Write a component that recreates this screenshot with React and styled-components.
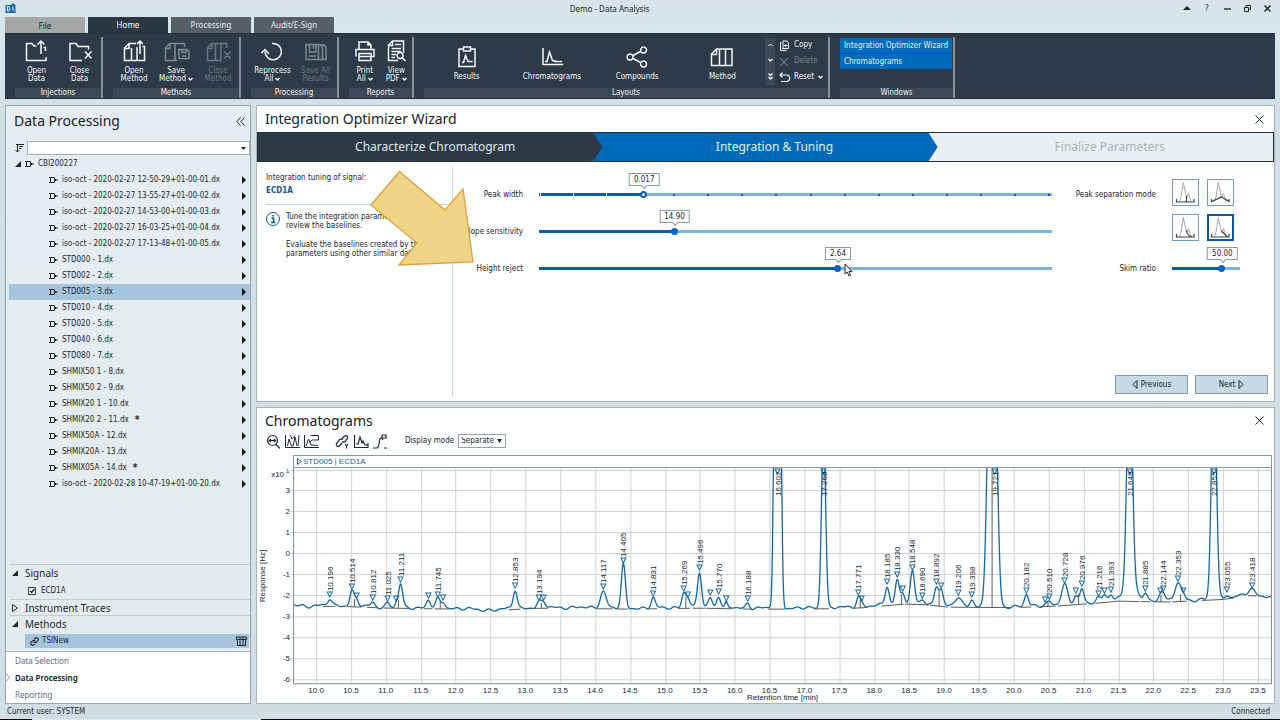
import React, { useState } from 'react';
import styled, { createGlobalStyle, css } from 'styled-components';
import { Link } from 'lucide-react';

const GlobalStyle = createGlobalStyle`
  * {
    box-sizing: border-box;
  }
  body {
    margin: 0;
    background: #d3dfe6;
  }
  body, button, input, select {
    font-family: "DejaVu Sans Condensed", "DejaVu Sans", sans-serif;
    font-size: 8px;
    line-height: 8px;
    color: #20282e;
  }
  button {
    padding: 0;
    border: 0;
    background: none;
  }
`;

const headingFont = '"Noto Sans", "Open Sans", sans-serif';

/* ---------- data ---------- */

const samples = [
  'iso-oct - 2020-02-27 12-50-29+01-00-01.dx',
  'iso-oct - 2020-02-27 13-55-27+01-00-02.dx',
  'iso-oct - 2020-02-27 14-53-00+01-00-03.dx',
  'iso-oct - 2020-02-27 16-03-25+01-00-04.dx',
  'iso-oct - 2020-02-27 17-13-48+01-00-05.dx',
  'STD000 - 1.dx',
  'STD002 - 2.dx',
  'STD005 - 3.dx',
  'STD010 - 4.dx',
  'STD020 - 5.dx',
  'STD040 - 6.dx',
  'STD080 - 7.dx',
  'SHMIX50 1 - 8.dx',
  'SHMIX50 2 - 9.dx',
  'SHMIX20 1 - 10.dx',
  'SHMIX20 2 - 11.dx',
  'SHMIX50A - 12.dx',
  'SHMIX20A - 13.dx',
  'SHMIX05A - 14.dx',
  'iso-oct - 2020-02-28 10-47-19+01-00-20.dx',
];

const changed = ['SHMIX20 2 - 11.dx', 'SHMIX05A - 14.dx'];

// retention time, apex height in px, half width in px, hide the label
const peaks = [
  [10.196, 599, 2], [10.514, 591, 2], [10.58, 600, 2, true], [10.812, 602, 2],
  [11.025, 603, 2], [11.15, 603, 1, true], [11.211, 584, 2], [11.61, 600, 2, true],
  [11.745, 599, 2], [11.82, 602, 2, true], [12.853, 590, 2], [13.194, 602, 2],
  [13.26, 602, 2, true], [14.117, 591, 3], [14.405, 565, 2], [14.831, 598, 2],
  [15.269, 593, 2], [15.33, 599, 2, true], [15.496, 572, 2], [15.65, 597, 2, true],
  [15.77, 596, 2], [15.88, 603, 1, true], [16.188, 603, 2], [17.771, 597, 2],
  [17.82, 603, 2, true], [18.185, 586, 2], [18.33, 579, 2], [18.41, 593, 2, true],
  [18.548, 572, 2], [18.69, 600, 2], [18.892, 586, 2], [18.96, 590, 2, true],
  [19.206, 597, 3], [19.398, 599, 2], [20.182, 595, 2], [20.45, 604, 2, true],
  [20.51, 601, 2], [20.728, 585, 3], [20.89, 595, 2, true], [20.976, 588, 2],
  [21.216, 598, 2], [21.3, 595, 2, true], [21.393, 594, 2], [21.885, 593, 2],
  [22.1, 595, 2, true], [22.144, 593, 2], [22.353, 583, 3], [22.43, 595, 2, true],
  [23.055, 594, 2], [23.418, 590, 3],
];

// peaks that run out of the plot: center px, amplitude, sigma
const tallPeaks = [
  [777, 1100, 2.1], [823, 183, 2], [988.5, 204, 2.6], [994.5, 204, 2.6],
  [1128.8, 237, 2.6], [1129, 16, 6], [1213, 237, 2.4],
];
const tallLabels = [[777, '16.602'], [823, '17.268'], [994, '19.721'], [1129, '21.648'], [1213, '22.855']];

const baseline = [
  [9.6, 604], [9.9, 606], [10.3, 605], [11, 607], [12, 608], [12.4, 610], [13.2, 607], [14.5, 608],
  [15.5, 607], [16.2, 608], [17, 608], [17.8, 607], [18.1, 605], [18.6, 602], [19, 606],
  [20, 606.5], [20.6, 605], [21.2, 602], [21.5, 600], [22.2, 601], [22.8, 599], [23.1, 598],
  [23.3, 594], [23.5, 595], [23.8, 598],
];

const drops = [
  [10.55, 599], [11.18, 600], [11.78, 601], [13.23, 603], [15.3, 597], [17.8, 599], [18.39, 594],
  [18.93, 590], [19.69, 468], [20.49, 601], [20.93, 594], [22.11, 595], [22.39, 594],
];
const cuts = [
  [10.1, 10.28], [10.45, 10.65], [10.73, 10.88], [10.97, 11.34], [11.55, 11.67], [11.7, 11.9],
  [12.76, 12.93], [13.13, 13.32], [14.02, 14.25], [14.32, 14.47], [14.76, 14.89], [15.19, 15.36],
  [15.4, 15.58], [15.59, 15.95], [16.12, 16.25], [16.48, 16.72], [17.15, 17.35], [17.7, 17.9],
  [18.1, 18.42], [18.44, 18.78], [18.8, 19.05], [19.1, 19.95], [20.1, 20.25], [20.38, 20.6],
  [20.63, 21.05], [21.17, 21.5], [21.5, 21.8], [21.82, 21.96], [22.03, 22.25], [22.27, 22.48],
  [22.7, 23], [22.98, 23.15], [23.36, 23.48],
];

const toX = (min) => 316 + (min - 10) * 69.7;
const toMin = (x) => 10 + (x - 316) / 69.7;

const baseAt = (min) => {
  const i = Math.max(1, baseline.findIndex(([m]) => m >= min));
  const [m0, y0] = baseline[i - 1];
  const [m1, y1] = baseline[i];
  return y0 + ((y1 - y0) * (min - m0)) / (m1 - m0);
};

const signal = () => {
  const points = [];
  for (let x = 294; x <= 1270; x += 0.5) {
    const min = toMin(x);
    const base = baseAt(min);
    let y = base + Math.sin(x * 0.37) * 0.8 + Math.sin(x * 0.61 + 2) * 0.7 + Math.sin(x * 0.17) * 0.6;
    peaks.forEach(([m, apex, w]) => {
      y -= (baseAt(m) - apex) * Math.exp(-((x - toX(m)) ** 2) / (2 * w * w));
    });
    tallPeaks.forEach(([c, a, s]) => {
      y -= a * Math.exp(-((x - c) ** 2) / (2 * s * s));
    });
    points.push(`${x},${Math.max(y, 460).toFixed(1)}`);
  }
  return points.join(' ');
};

/* ---------- icons ---------- */

const Svg = styled.svg`
  display: block;
  flex: none;
  fill: none;
  stroke: currentColor;
  stroke-width: ${(p) => p.$w || 1.4};
  overflow: visible;
`;

const Icon = ({ size = 24, height, box, w, children }) => (
  <Svg width={size} height={height || size} viewBox={box || `0 0 ${size} ${height || size}`} $w={w} aria-hidden="true">
    {children}
  </Svg>
);

const ribbonIcons = {
  openData: <path d="M11.500 7H9L7 4.500H1.500V21.500H21V18M20.500 12V8.500H18.500M16 15V2M12.500 5.500L16 2 19.500 5.500" />,
  closeData: <path d="M14 21.500H2V4.500H8L10 7.500H20.500V10.500M17 12.500L23.500 19.500M23.500 12.500L17 19.500" />,
  openMethod: <path d="M14 4.500H7L2.500 9V21.500H22.500V7.500H20.500M2.500 9.500H7V4.500M9.500 21.500V9M15 21.500V8M18 15V2M15 5L18 2 21 5" />,
  saveMethod: <path d="M13 21.500H1.500V9L6 4.500H20.500V8M1.500 9.500H6V4.500M11 4.500V21.500M15 10.500H23L25 12.500V19.500H15ZM18 10.500V13.500H22V10.500M18 17H22" />,
  closeMethod: <path d="M15 21.500H1.500V9L6 4.500H20.500V9M1.500 9.500H6V4.500M9.500 4.500V21.500M15 4.500V21.500M18 12.500L24.500 19.500M24.500 12.500L18 19.500" />,
  reprocess: <path d="M11 4.500A8.200 8.200 0 1 1 4 12.500M.5 14L4 10.500 8 15" />,
  saveAll: <path d="M2 5.500H14.500V20.500H2ZM5.500 5.500V13H12V5.500M9.500 5.500V10M15 5.500Q18.500 6 18.500 10V20.500M18 5.500Q22 6 22 10V20.500H2M5 17H12" />,
  print: <path d="M6 10.500V3H15L18 6V10.500M3 17.500V10.500H21V17.500H18M6 14.500H18V21.500H6ZM15 3V6H18M6 17.500H18" />,
  pdf: <path d="M14 21.500H4.500V6L8.500 2H19.500V14M4.500 6.500H8.500V2M11 5.500H17M7.500 9.500H17M7.500 12.500H17M7.500 15.500H12M7.500 18.500H11M16 13.500a3 3 0 1 0 .1 0M18 18.500L21.500 22" />,
  results: <path d="M8 4H4V21.500H20V4H16M8.500 2H15.500V6H8.500ZM7 17.500H8.500L10.500 10.500 13 16.500H17.500" />,
  chrom: <path d="M3 3V19.500H23M5 16.500H7L9.500 7 12.500 15.500Q16 17 22 16.500" />,
  compounds: <path d="M8 10.500L15.500 6.500M8 13.500L15.500 17.500M5 9a3 3 0 1 0 .1 0M18.500 2a3 3 0 1 0 .1 0M18.500 16a3 3 0 1 0 .1 0" />,
  method: <path d="M6.500 4H22V20.500H1.500V9ZM1.500 9.500H6.500V4M9.500 4V20.500M15.500 4V20.500" />,
};

const Chevron = () => (
  <Icon size={5} height={4} w={1.4}><path d="M0.500 1L2.500 3 4.500 1" /></Icon>
);

const CloseIcon = () => (
  <Icon size={9} w={1}><path d="M0.500 .5L8.500 8.500M8.500 .5L.5 8.500" /></Icon>
);

const SampleIcon = () => (
  <Icon size={9} height={8} w={1}>
    <path d="M0 1.500H5.500V6.500H0M1.500 1.500V6.500M5.500 2.500L7 4 5.500 5.500M7 4H9" />
  </Icon>
);

const TriOpen = () => (
  <Icon size={6} w={1}><path d="M6 0V6H0Z" fill="currentColor" stroke="none" /></Icon>
);

const TriClosed = () => (
  <Icon size={6} height={8} w={1}><path d="M.5 .5L5.500 4 .5 7.500Z" /></Icon>
);

/* ---------- window frame ---------- */

const Page = styled.div`
  display: flex;
  flex-direction: column;
  min-height: 100vh;
  background: linear-gradient(#d9e3ec, #d8e7ec 32px, #d3dfe6 104px, #d2dee5);
`;

const TitleBar = styled.header`
  display: flex;
  align-items: center;
  height: 17px;
  padding: 0 3px 0 5px;
`;

const Title = styled.h1`
  flex: 1;
  margin: 0;
  padding-left: 26px;
  text-align: center;
  font: 400 8px/12px ${headingFont};
`;

const WindowButton = styled.button`
  display: grid;
  place-items: center;
  width: 20px;
  height: 14px;
`;

const TabList = styled.nav`
  display: flex;
  align-items: flex-end;
  gap: 3px;
  height: 16px;
  padding: 0 5px;
`;

const Tab = styled.button`
  width: 80px;
  height: 16px;
  background: #545f68;
  color: #e6ebee;
  font: 400 8px/16px ${headingFont};
  ${(p) => p.$file && css`
    background: #a5a6a6;
    color: #20282e;
    line-height: 18px;
  `}
  ${(p) => p.$active && css`
    background: #2b3743;
    color: #fff;
  `}
`;

const Ribbon = styled.div`
  display: flex;
  height: 66px;
  margin: 0 5px;
  padding-top: 3px;
  background: #2d3a47;
  border-top: 1px solid #22303b;
  border-bottom: 1px solid #22303b;
  color: #eef2f4;
`;

const Group = styled.section`
  display: flex;
  flex-direction: column;
  width: ${(p) => p.$width}px;
  padding-left: 10px;
  border-right: 2px solid #84909a;
`;

const GroupBody = styled.div`
  display: flex;
  flex: 1;
`;

const GroupTitle = styled.h2`
  margin: 0;
  height: 10px;
  background: #3c4855;
  text-align: center;
  font-weight: 400;
  font-size: 8px;
  line-height: 10px;
`;

const RibbonButton = styled.button`
  display: flex;
  flex-direction: column;
  align-items: center;
  flex: 1;
  gap: 4px;
  padding-top: ${(p) => (p.$big ? 8 : 2)}px;
  color: ${(p) => (p.disabled ? '#6b7782' : '#f4f7f8')};
  & > svg {
    color: ${(p) => (p.$dim ? '#7f8a94' : 'inherit')};
  }
`;

const RibbonLabel = styled.span`
  display: flex;
  align-items: center;
  gap: 2px;
`;

const Stack = styled.span`
  display: flex;
  flex-direction: column;
  align-items: center;
`;

const Scroller = styled.div`
  display: flex;
  flex-direction: column;
  justify-content: space-around;
  align-items: center;
  width: 10px;
  margin: 1px 0 3px;
  background: #3c4855;
`;

const ActionList = styled.div`
  display: flex;
  flex-direction: column;
  width: 53px;
  padding: 0 0 3px 4px;
`;

const Action = styled.button`
  display: flex;
  align-items: center;
  flex: 1;
  gap: 4px;
  color: ${(p) => (p.disabled ? '#77838e' : '#f4f7f8')};
`;

const WindowList = styled.div`
  display: flex;
  flex-direction: column;
  flex: 1;
  gap: 1px;
  padding: 1px 1px 0 0;
`;

const WindowItem = styled.button`
  height: 15px;
  padding-left: 4px;
  background: #006bb8;
  color: #e4f1fa;
  text-align: left;
  white-space: nowrap;
`;

const Main = styled.main`
  display: grid;
  grid-template-columns: 246px minmax(0, 1fr);
  gap: 5px;
  flex: 1;
  padding: 6px 5px 0;
`;

const StatusBar = styled.footer`
  display: flex;
  justify-content: space-between;
  align-items: center;
  height: 16px;
  padding: 0 10px 0 7px;
  background: linear-gradient(90deg, #000 32px, #dfe8ec 32px, #dfe8ec 261px, #000 261px) bottom / 100% 1px no-repeat;
`;

/* ---------- left panel ---------- */

const Side = styled.aside`
  display: flex;
  flex-direction: column;
  background: linear-gradient(#e6edf2, #e4ebef);
  border: 1px solid #9aa6ae;
`;

const PanelHead = styled.div`
  display: flex;
  justify-content: space-between;
  align-items: center;
  height: ${(p) => p.$height}px;
  margin-bottom: ${(p) => p.$below || 0}px;
  padding: 0 ${(p) => p.$right}px 0 8px;
`;

const PanelTitle = styled.h2`
  margin: 0;
  font: 400 14px/20px ${headingFont};
  color: #1a2126;
`;

const FilterRow = styled.div`
  display: flex;
  align-items: center;
  gap: 3px;
  height: 14px;
  padding-left: 9px;
`;

const FilterSelect = styled.select`
  flex: 1;
  height: 14px;
  appearance: none;
  border: 1px solid #a3afb8;
  border-radius: 0;
  background: #fff;
`;

const SelectBox = styled.span`
  display: grid;
  grid-template-columns: 1fr 9px;
  align-items: center;
  flex: ${(p) => (p.$grow ? 1 : 'none')};
  & > select {
    grid-area: 1 / 1 / 2 / 3;
  }
  & > svg {
    grid-area: 1 / 2;
    pointer-events: none;
  }
`;

const Tree = styled.ul`
  flex: 1;
  margin: 0;
  padding: 1px 0 0 3px;
  list-style: none;
`;

const TreeRow = styled.li`
  display: flex;
  align-items: center;
  gap: 4px;
  height: 16px;
  padding: 0 4px 0 ${(p) => (p.$root ? 6 : 40)}px;
  background: ${(p) => (p.$selected ? '#a5c5dc' : 'transparent')};
`;

const RowName = styled.span`
  display: flex;
  align-items: center;
  gap: 6px;
  flex: 1;
  white-space: nowrap;
`;

const Star = styled.b`
  font-size: 10px;
`;

const Section = styled.section`
  margin-left: 4px;
  border-top: 1px solid #c2cbd1;
  padding-left: 2px;
`;

const SectionTitle = styled.h3`
  display: flex;
  align-items: center;
  gap: 7px;
  margin: 0;
  height: 15px;
  font: 400 10px/14px ${headingFont};
`;

const SignalRow = styled.label`
  display: flex;
  align-items: center;
  gap: 5px;
  height: 19px;
  padding: 2px 0 0 16px;
`;

const TickBox = styled.span`
  display: grid;
  place-items: center;
  width: 8px;
  height: 8px;
  & > * {
    grid-area: 1 / 1;
  }
  & > input {
    appearance: none;
    width: 8px;
    height: 8px;
    margin: 0;
    border: 1px solid #3d474e;
  }
  & > svg {
    pointer-events: none;
  }
`;

const MethodRow = styled.div`
  display: flex;
  align-items: center;
  gap: 3px;
  height: 14px;
  margin: 3px 1px 3px 13px;
  padding: 0 2px 0 5px;
  background: #a5c5dc;
  & > span {
    flex: 1;
  }
`;

const NavList = styled.nav`
  display: flex;
  flex-direction: column;
  background: #fcfdfd;
  border-top: 1px solid #a8b2b9;
`;

const NavItem = styled.a`
  position: relative;
  height: 17px;
  padding-left: 9px;
  font: ${(p) => (p.$active ? 600 : 400)} 8px/17px ${headingFont};
  color: ${(p) => (p.$active ? '#11181c' : '#65707a')};
  text-decoration: none;
  & > svg {
    position: absolute;
    left: -1px;
    top: 4px;
    color: #8d979e;
  }
`;

/* ---------- wizard ---------- */

const Content = styled.div`
  display: grid;
  grid-template-rows: 297px 1fr;
  gap: 5px;
`;

const Panel = styled.section`
  display: flex;
  flex-direction: column;
  min-width: 0;
  background: #fdfefe;
  border: 1px solid #aab5bc;
`;

const Steps = styled.ol`
  display: grid;
  grid-template-columns: 335fr 335fr 344fr;
  height: 30px;
  margin: 0;
  padding: 0;
  list-style: none;
  border: 1px solid #242e36;
  background: #e9eff3;
`;

const Step = styled.li`
  position: relative;
  z-index: ${(p) => p.$order};
  margin-right: -9px;
  padding-left: ${(p) => p.$left}px;
  background: ${(p) => p.$bg};
  color: ${(p) => p.$color};
  clip-path: polygon(0 0, calc(100% - 9px) 0, 100% 50%, calc(100% - 9px) 100%, 0 100%);
  text-align: center;
  font: 400 12px/28px ${headingFont};
  &:last-child {
    margin-right: 0;
    clip-path: none;
  }
`;

const WizardBody = styled.div`
  position: relative;
  display: grid;
  grid-template-columns: 196px minmax(0, 1fr) 200px;
  grid-template-rows: 1fr auto;
  flex: 1;
  padding: 4px 0;
`;

const Info = styled.div`
  grid-row: span 2;
  padding: 6px 4px 0 9px;
  border-right: 1px solid #d3d9dd;
  line-height: 12px;
`;

const Blue = styled.strong`
  display: block;
  margin-bottom: 6px;
  color: #12578c;
  line-height: 14px;
`;

const Note = styled.div`
  display: flex;
  gap: 6px;
  padding-top: 7px;
  border-top: 1px solid #ccd3d8;
  & p {
    margin: 0 0 10px;
    line-height: 9px;
    white-space: nowrap;
  }
`;

const SliderGrid = styled.div`
  display: grid;
  grid-template-columns: ${(p) => p.$label}px minmax(0, 1fr);
  grid-auto-rows: 37px;
  column-gap: 16px;
  align-items: center;
  align-content: start;
  padding: 10px ${(p) => p.$right}px 0 0;
`;

const FieldLabel = styled.label`
  text-align: right;
  white-space: nowrap;
`;

const SliderBox = styled.div`
  position: relative;
  display: grid;
  align-items: center;
  height: 9px;
`;

const Range = styled.input`
  grid-area: 1 / 1;
  appearance: none;
  width: 100%;
  height: 3px;
  margin: 0;
  background: linear-gradient(90deg, #0b5cab ${(p) => p.$fill}%, #7db3da ${(p) => p.$fill}%);
  &::-webkit-slider-thumb {
    appearance: none;
    width: 7px;
    height: 7px;
    border-radius: 50%;
    border: ${(p) => (p.$hollow ? '2px solid #0b5cab' : '0')};
    background: ${(p) => (p.$hollow ? '#fff' : '#0d63c0')};
  }
`;

const Ticks = styled.div`
  grid-area: 1 / 1;
  display: flex;
  justify-content: space-between;
  align-items: center;
  padding: 0 2px 0 1px;
  pointer-events: none;
`;

const TickMark = styled.i`
  width: ${(p) => (p.$gap ? 1 : 2)}px;
  height: ${(p) => (p.$gap ? 3 : 2)}px;
  background: ${(p) => (p.$hide ? 'transparent' : p.$gap ? '#e8f2fa' : '#27567c')};
`;

const Bubble = styled.output`
  position: absolute;
  bottom: 13px;
  height: 13px;
  padding: 0 4px;
  border: 1px solid #8d979e;
  background: #fff;
  line-height: 11px;
  transform: translateX(-50%);
  &::after {
    content: "";
    position: absolute;
    left: calc(50% - 2px);
    bottom: -3px;
    width: 4px;
    height: 4px;
    border: solid #8d979e;
    border-width: 0 1px 1px 0;
    background: #fff;
    transform: rotate(45deg);
  }
`;

const ModeGrid = styled.div`
  display: grid;
  grid-template-columns: 27px 27px;
  gap: 8px;
  grid-row: span 2;
  align-self: start;
  padding-top: 3px;
`;

const ModeButton = styled.button`
  display: grid;
  place-items: center;
  width: 27px;
  height: 27px;
  border: ${(p) => (p.$selected ? '2px solid #0a55a6' : '1px solid #6f9cbd')};
  background: #fff;
`;

const WizardFooter = styled.div`
  grid-column: 2 / 4;
  display: flex;
  justify-content: flex-end;
  gap: 7px;
  padding: 0 6px 3px;
`;

const StepButton = styled.button`
  display: flex;
  align-items: center;
  justify-content: center;
  gap: 3px;
  width: 73px;
  height: 19px;
  border: 1px solid #8499a6;
  background: #c8dae5;
`;

const Pointer = styled.svg`
  position: absolute;
  left: 113px;
  top: 8px;
`;

const MouseCursor = styled.svg`
  position: absolute;
  left: 587px;
  top: 101px;
`;

/* ---------- chromatogram ---------- */

const Toolbar = styled.div`
  display: flex;
  align-items: center;
  gap: 4px;
  height: 16px;
  padding-left: 9px;
`;

const Gap = styled.span`
  width: ${(p) => p.$size}px;
`;

const ModeSelect = styled.select`
  width: 48px;
  height: 14px;
  padding: 0 2px;
  appearance: none;
  border: 1px solid #98a2a9;
  border-radius: 0;
  background: #fff;
`;

const PlotHead = styled.div`
  display: flex;
  align-items: center;
  gap: 1px;
  height: 13px;
  margin: 6px 2px 0 36px;
  padding-left: 3px;
  border: 1px solid #8d979e;
  color: #1f6594;
  font: 400 8px/10px "Liberation Sans", Arial, sans-serif;
`;

const Plot = styled.svg`
  display: block;
  width: 100%;
  font: 8px "Liberation Sans", Arial, sans-serif;
  fill: #20282e;
`;

// how the small peak is cut off from the large one
const modeShapes = [
  'M2.500 18V21H20V18M12.500 21V15',
  'M2.500 18V20.500L12.500 16 20 20.500V18',
  'M2.500 18V21H20V18M12.500 14.500Q13.500 20 17.500 20.500',
  'M2.500 18V21H20V18M12.500 15L18 20.500',
];

function Slider({ id, value, fill, ticks, hollow }) {
  const [pos, setPos] = useState(fill);
  return (
    <SliderBox>
      <Range
        id={id} type="range" min="0" max="100" step="0.1" value={pos}
        $fill={pos} $hollow={hollow}
        onChange={(e) => setPos(Number(e.target.value))}
      />
      {ticks && (
        <Ticks>
          {Array.from({ length: 16 }, (_, i) => (
            <TickMark key={i} $gap={i < 3} $hide={i === 3} />
          ))}
        </Ticks>
      )}
      <Bubble htmlFor={id} style={{ left: `calc(4px + (100% - 7px) * ${pos / 100})` }}>{value}</Bubble>
    </SliderBox>
  );
}

function RibbonItem({ icon, lines, menu, disabled, dim, big }) {
  return (
    <RibbonButton disabled={disabled} $big={big} $dim={dim}>
      <Icon size={24} w={1.5}>{ribbonIcons[icon]}</Icon>
      <Stack>
        {lines.map((line, i) => (
          <RibbonLabel key={line}>
            {line}
            {menu && i === lines.length - 1 && <Chevron />}
          </RibbonLabel>
        ))}
      </Stack>
    </RibbonButton>
  );
}

function RibbonBar() {
  return (
    <Ribbon>
      <Group $width={98}>
        <GroupBody>
          <RibbonItem icon="openData" lines={['Open', 'Data']} />
          <RibbonItem icon="closeData" lines={['Close', 'Data']} />
        </GroupBody>
        <GroupTitle>Injections</GroupTitle>
      </Group>
      <Group $width={138}>
        <GroupBody>
          <RibbonItem icon="openMethod" lines={['Open', 'Method']} />
          <RibbonItem icon="saveMethod" lines={['Save', 'Method']} menu dim />
          <RibbonItem icon="closeMethod" lines={['Close', 'Method']} disabled />
        </GroupBody>
        <GroupTitle>Methods</GroupTitle>
      </Group>
      <Group $width={98}>
        <GroupBody>
          <RibbonItem icon="reprocess" lines={['Reprocess', 'All']} menu />
          <RibbonItem icon="saveAll" lines={['Save All', 'Results']} disabled dim />
        </GroupBody>
        <GroupTitle>Processing</GroupTitle>
      </Group>
      <Group $width={75}>
        <GroupBody>
          <RibbonItem icon="print" lines={['Print', 'All']} menu />
          <RibbonItem icon="pdf" lines={['View', 'PDF']} menu />
        </GroupBody>
        <GroupTitle>Reports</GroupTitle>
      </Group>
      <Group $width={416}>
        <GroupBody>
          <RibbonItem icon="results" lines={['Results']} big />
          <RibbonItem icon="chrom" lines={['Chromatograms']} big />
          <RibbonItem icon="compounds" lines={['Compounds']} big />
          <RibbonItem icon="method" lines={['Method']} big />
          <Scroller>
            <Icon size={5} height={4} w={1}><path d="M.5 3L2.500 1 4.500 3" /></Icon>
            <Chevron />
            <Icon size={5} height={7}><path d="M.5 .5L2.500 2.500 4.500 .5M.5 4L2.500 6 4.500 4" /></Icon>
          </Scroller>
          <ActionList>
            <Action>
              <Icon size={11} w={1}><path d="M4 1H8L9.500 3V8.500H3M4 1V8.500M2.500 2.500H1.500V10.500H7.500M5 5.500H8.500M6.700 4V7.300" /></Icon>
              Copy
            </Action>
            <Action disabled>
              <Icon size={11} w={1}><path d="M1 2L9 10M9 2L1 10" /></Icon>
              Delete
            </Action>
            <Action>
              <Icon size={11} w={1.2}><path d="M3.500 .5L1 3 3.500 5.500M1 3H7.500A3 3 0 0 1 7.500 9.500H2" /></Icon>
              Reset
              <Chevron />
            </Action>
          </ActionList>
        </GroupBody>
        <GroupTitle>Layouts</GroupTitle>
      </Group>
      <Group $width={125}>
        <GroupBody>
          <WindowList>
            <WindowItem>Integration Optimizer Wizard</WindowItem>
            <WindowItem>Chromatograms</WindowItem>
          </WindowList>
        </GroupBody>
        <GroupTitle>Windows</GroupTitle>
      </Group>
    </Ribbon>
  );
}

function DataPanel() {
  return (
    <Side>
      <PanelHead $height={30} $right={5} $below={5}>
        <PanelTitle>Data Processing</PanelTitle>
        <button aria-label="Collapse">
          <Icon size={9} w={1}><path d="M4.500 .5L.8 4.500 4.500 8.500M8.500 .5L4.800 4.500 8.500 8.500" /></Icon>
        </button>
      </PanelHead>
      <FilterRow>
        <Icon size={9} w={1}><path d="M2.500 1V8M.5 6L2.500 8 4.500 6M1 .5H9M4 2.500H8M4 4.500H6.500" /></Icon>
        <SelectBox $grow>
          <FilterSelect aria-label="Filter"><option> </option></FilterSelect>
          <Icon size={5} height={3}><path d="M0 0H5L2.500 3Z" fill="currentColor" stroke="none" /></Icon>
        </SelectBox>
      </FilterRow>
      <Tree>
        <TreeRow $root>
          <TriOpen />
          <SampleIcon />
          <RowName>CBI200227</RowName>
        </TreeRow>
        {samples.map((name) => (
          <TreeRow key={name} $selected={name.startsWith('STD005')}>
            <SampleIcon />
            <RowName>
              {name}
              {changed.includes(name) && <Star>*</Star>}
            </RowName>
            <Icon size={4} height={8}><path d="M0 0V8L4 4Z" fill="#11181c" stroke="none" /></Icon>
          </TreeRow>
        ))}
      </Tree>
      <Section>
        <SectionTitle><TriOpen />Signals</SectionTitle>
        <SignalRow>
          <TickBox>
            <input type="checkbox" defaultChecked />
            <Icon size={6} w={1.2}><path d="M1 3L2.500 4.500 5.500 1" /></Icon>
          </TickBox>
          ECD1A
        </SignalRow>
      </Section>
      <Section>
        <SectionTitle><TriClosed />Instrument Traces</SectionTitle>
      </Section>
      <Section>
        <SectionTitle><TriOpen />Methods</SectionTitle>
        <MethodRow>
          <Link size={9} strokeWidth={3} aria-hidden="true" />
          <span>TSINew</span>
          <Icon size={11} height={10} w={1}><path d="M.5 1H10.500V3.500H.5ZM1.500 3.500V9.500H9.500V3.500M4 1V9.500M7 1V9.500" /></Icon>
        </MethodRow>
      </Section>
      <NavList>
        <NavItem href="#selection">Data Selection</NavItem>
        <NavItem href="#processing" $active>
          <Icon size={6} height={9} w={1}><path d="M0 0L5 4.500 0 9" /></Icon>
          Data Processing
        </NavItem>
        <NavItem href="#reporting">Reporting</NavItem>
      </NavList>
    </Side>
  );
}

function Wizard() {
  return (
    <Panel>
      <PanelHead $height={26} $right={10}>
        <PanelTitle>Integration Optimizer Wizard</PanelTitle>
        <button aria-label="Close wizard"><CloseIcon /></button>
      </PanelHead>
      <Steps>
        <Step $order={3} $left={10} $bg="#2d3a45" $color="#dfe8ed">Characterize Chromatogram</Step>
        <Step $order={2} $left={18} $bg="#006ab8" $color="#dff0fb">Integration &amp; Tuning</Step>
        <Step $order={1} $left={18} $bg="#e9f0f3" $color="#a9b3ba">Finalize Parameters</Step>
      </Steps>
      <WizardBody>
        <Info>
          Integration tuning of signal:
          <Blue>ECD1A</Blue>
          <Note>
            <Icon size={14} w={1}>
              <circle cx="7" cy="7" r="6.500" stroke="#12578c" />
              <path d="M5.500 6H7.500V10.500M5 10.500H9.500M7 3V4.500" stroke="#12578c" strokeWidth="1.600" />
            </Icon>
            <div>
              <p>Tune the integration parameters and<br />review the baselines.</p>
              <p>Evaluate the baselines created by the<br />parameters using other similar data.</p>
            </div>
          </Note>
        </Info>
        <SliderGrid $label={70} $right={22}>
          <FieldLabel htmlFor="peakWidth">Peak width</FieldLabel>
          <Slider id="peakWidth" value="0.017" fill={20} ticks hollow />
          <FieldLabel htmlFor="slope">Slope sensitivity</FieldLabel>
          <Slider id="slope" value="14.90" fill={26} />
          <FieldLabel htmlFor="height">Height reject</FieldLabel>
          <Slider id="height" value="2.64" fill={58.3} />
        </SliderGrid>
        <SliderGrid $label={82} $right={34}>
          <FieldLabel as="span">Peak separation mode</FieldLabel>
          <ModeGrid>
            {modeShapes.map((d, i) => (
              <ModeButton key={d} $selected={i === 3} aria-label={`Peak separation mode ${i + 1}`}>
                <Icon size={23} w={1}>
                  <path d="M5.500 20.500L7 16 9.300 1.500 12.500 16.500 14.500 12.500 17 20.500" stroke="#a4a8aa" />
                  <path d={d} stroke="#3a3f42" strokeWidth="1.200" />
                </Icon>
              </ModeButton>
            ))}
          </ModeGrid>
          <span />
          <FieldLabel htmlFor="skim">Skim ratio</FieldLabel>
          <Slider id="skim" value="50.00" fill={76} />
        </SliderGrid>
        <WizardFooter>
          <StepButton>
            <Icon size={6} height={9} w={1}><path d="M5 .5V8.500L1 4.500Z" /></Icon>
            Previous
          </StepButton>
          <StepButton>
            Next
            <Icon size={6} height={9} w={1}><path d="M1 .5V8.500L5 4.500Z" /></Icon>
          </StepButton>
        </WizardFooter>
        <Pointer width="104" height="96" viewBox="370 170 104 96" aria-hidden="true">
          <path d="M399.500 171.500L445 210 463 189 473 262 399 265 417 243 371 205Z" fill="#f0d588" stroke="#dda136" strokeWidth="1.300" />
        </Pointer>
        <MouseCursor width="9" height="14" viewBox="0 0 9 14" aria-hidden="true">
          <path d="M1 1V11L3.200 9 5 13 6.500 12.300 5 8.500H8Z" fill="#fff" stroke="#20282e" />
        </MouseCursor>
      </WizardBody>
    </Panel>
  );
}

function Chart() {
  const minutes = Array.from({ length: 28 }, (_, i) => 10 + i / 2);
  const levels = [3, 2, 1, 0, -1, -2, -3, -4, -5, -6];
  return (
    <Plot viewBox="257 468 1016 234" role="img" aria-label="Chromatogram STD005 ECD1A">
      <clipPath id="plotArea"><rect x="293" y="468" width="978" height="215" /></clipPath>
      <g stroke="#cfd2d4">
        {levels.map((v) => <path key={v} d={`M290 ${554 - v * 21 - 0.5}H1270`} />)}
        <path d="M290 470.500H1270" />
        {minutes.map((m) => <path key={m} d={`M${Math.round(toX(m)) + 0.5} 468V683`} />)}
      </g>
      <path d="M293.500 468V683.500H1270.500V468" fill="none" stroke="#858c91" />
      <g fill="none" clipPath="url(#plotArea)">
        <g stroke="#4c4848" strokeWidth="0.900">
          {cuts.map(([a, b]) => <path key={a} d={`M${toX(a)} ${baseAt(a) + 1}L${toX(b)} ${baseAt(b) + 1}`} />)}
          {drops.map(([m, y]) => <path key={m} d={`M${toX(m)} ${y}V${baseAt(m) + 1}`} />)}
        </g>
        <polyline points={signal()} stroke="#17679f" strokeWidth="1.300" strokeLinejoin="round" />
        <g stroke="#17679f">
          {peaks.map(([m, y]) => <path key={m} d={`M${toX(m) - 2.5} ${y - 7}h5l-2.500 5z`} />)}
          {tallLabels.map(([x]) => <path key={x} d={`M${x - 2.5} 469h5l-2.500 5z`} />)}
        </g>
      </g>
      {peaks.filter((p) => !p[3]).map(([m, y]) => (
        <text key={m} transform={`translate(${toX(m) + 3} ${y - 8}) rotate(-90)`}>{m.toFixed(3)}</text>
      ))}
      {tallLabels.map(([x, t]) => (
        <text key={t} transform={`translate(${x + 3} 496) rotate(-90)`}>{t}</text>
      ))}
      <g textAnchor="end">
        {levels.map((v) => <text key={v} x="290" y={554 - v * 21 + 2}>{v}</text>)}
        <text x="284" y="477">x10</text>
      </g>
      <text x="286" y="473" fontSize="6">1</text>
      <g textAnchor="middle">
        {minutes.map((m) => <text key={m} x={toX(m)} y="693">{m.toFixed(1)}</text>)}
        <text x="782" y="700">Retention time [min]</text>
        <text transform="translate(265 576) rotate(-90)">Response [Hz]</text>
      </g>
    </Plot>
  );
}

function Chromatograms() {
  return (
    <Panel>
      <PanelHead $height={25} $right={10}>
        <PanelTitle>Chromatograms</PanelTitle>
        <button aria-label="Close chromatograms"><CloseIcon /></button>
      </PanelHead>
      <Toolbar>
        <button aria-label="Zoom">
          <Icon size={15} w={1.2}><path d="M6.500 1.500a5 5 0 1 0 .1 0M10 10.500L14 14.500M3.500 6.500H9.500M5 5L3.500 6.500 5 8M8 5L9.500 6.500 8 8" /></Icon>
        </button>
        <button aria-label="Overlay">
          <Icon size={15} w={1}><path d="M.5 1V13.500H15M2.500 12L4 5 6.500 12H8L10 3 12 12M5 1L7 5 10 1.500M14 1L13 12" /></Icon>
        </button>
        <button aria-label="Annotations">
          <Icon size={15} w={1}><path d="M.5 1V13.500H15M2 12L4.500 5 7 11 14 11.500M6.500 1.500H14.500V6H8L6 8" /></Icon>
        </button>
        <Gap $size={8} />
        <button aria-label="Link">
          <Icon size={15} w={1.2}>
            <path d="M7 5L9.500 2A2 2 0 0 1 12.500 4.500L10 7.500A2 2 0 0 1 7 7.500M7.500 6A2 2 0 0 0 4 6.500L1.500 9.500A2 2 0 0 0 4.500 12L7 9M10 10L11.500 12 13 10M11.500 12V14.500" />
          </Icon>
        </button>
        <button aria-label="Peaks">
          <Icon size={15} w={1.2}><path d="M.5 1V13.500H14M2 10L4 10 6 3 8 9 9 7 11 11 14 11M14 9V14" /></Icon>
        </button>
        <button aria-label="Baseline">
          <Icon size={15} w={1.2}><path d="M0 14H4Q6 13 6.500 6 8 2 10 6M11 14H14M9 1H13V4H9Z" /></Icon>
        </button>
        <Gap $size={9} />
        <label htmlFor="displayMode">Display mode</label>
        <SelectBox>
          <ModeSelect id="displayMode"><option>Separate</option></ModeSelect>
          <Icon size={5} height={4}><path d="M0 0H5L2.500 4Z" fill="currentColor" stroke="none" /></Icon>
        </SelectBox>
      </Toolbar>
      <PlotHead>
        <Icon size={5} height={7} w={1}><path d="M.5 .5L4.500 3.500 .5 6.500Z" /></Icon>
        STD005 | ECD1A
      </PlotHead>
      <Chart />
    </Panel>
  );
}

const App = () => {
  return (
    <Page>
      <GlobalStyle />
      <TitleBar>
        <Icon size={11} height={13} w={1}>
          <path d="M.5 3H6L8 1 10.500 3V11H.5Z" fill="#1c6ca8" stroke="none" />
          <path d="M2.500 4.500V9H4Q6 7 4 4.500ZM8 4.500V9M0 12.500H11" stroke="#e5f0f8" />
        </Icon>
        <Title>Demo - Data Analysis</Title>
        <WindowButton aria-label="Collapse ribbon">
          <Icon size={8} height={5}><path d="M4 0L8 4H0Z" fill="currentColor" stroke="none" /></Icon>
        </WindowButton>
        <WindowButton>?</WindowButton>
        <WindowButton aria-label="Minimize"><Icon size={7} height={2}><path d="M0 1H7" /></Icon></WindowButton>
        <WindowButton aria-label="Restore">
          <Icon size={7} w={1}><path d="M.5 2.500H4.500V6.500H.5ZM2 2.500V.5H6.500V4.500H4.500" /></Icon>
        </WindowButton>
        <WindowButton aria-label="Close"><Icon size={7} w={1.5}><path d="M.5 .5L6.500 6.500M6.500 .5L.5 6.500" /></Icon></WindowButton>
      </TitleBar>
      <TabList>
        <Tab $file>File</Tab>
        <Tab $active>Home</Tab>
        <Tab>Processing</Tab>
        <Tab>Audit/E-Sign</Tab>
      </TabList>
      <RibbonBar />
      <Main>
        <DataPanel />
        <Content>
          <Wizard />
          <Chromatograms />
        </Content>
      </Main>
      <StatusBar>
        <span>Current user: SYSTEM</span>
        <span>Connected</span>
      </StatusBar>
    </Page>
  );
};

export default App;
